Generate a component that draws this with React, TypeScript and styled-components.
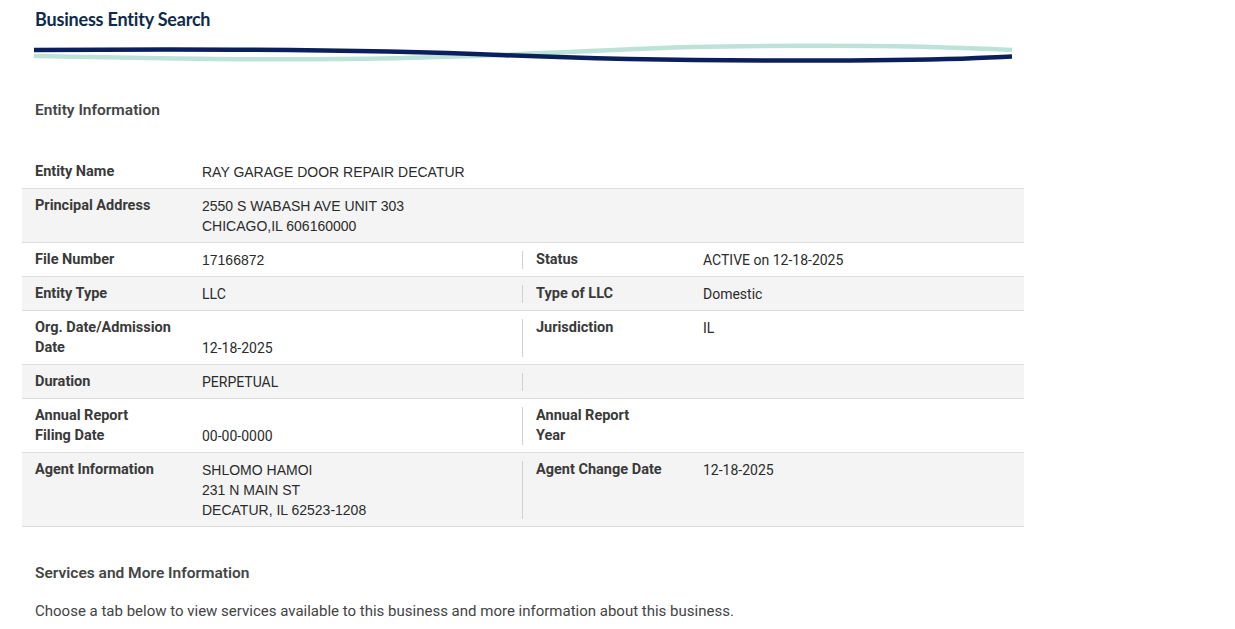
import React from "react";
import styled, { createGlobalStyle } from "styled-components";

const Global = createGlobalStyle`
  html, body { margin: 0; padding: 0; background: #fff; }
  body { font-family: Roboto, "Liberation Sans", sans-serif; color: #333; }
`;

const Page = styled.div`
  width: 1235px;
  padding: 0 0 0 22px;
  box-sizing: border-box;
`;

const Header = styled.header`
  padding: 8px 0 0 13px;
  width: 978px;
`;

const Title = styled.h1`
  margin: 0;
  font-family: Lato, "Noto Sans", sans-serif;
  font-weight: 700;
  font-size: 18px;
  line-height: 22px;
  color: #0f2a4a;
  letter-spacing: -0.2px;
`;

const Wave = styled.svg`
  display: block;
  margin: 10px 0 0 -1px;
`;

const SectionTitle = styled.h2`
  margin: 0;
  padding: 0 0 0 13px;
  font-size: 15.5px;
  line-height: 20px;
  font-weight: 600;
  color: #454545;
`;

const InfoTitle = styled(SectionTitle)`
  margin-top: 34px;
`;

const Table = styled.div`
  margin-top: 35px;
  width: 1002px;
`;

const Row = styled.div<{ $shade?: boolean }>`
  display: flex;
  align-items: stretch;
  background: ${(p) => (p.$shade ? "#f4f4f4" : "#fff")};
  border-bottom: 1px solid #dcdcdc;
`;

const Half = styled.div<{ $full?: boolean }>`
  display: grid;
  grid-template-columns: 180px 1fr;
  padding: 7px 0 6px;
  box-sizing: border-box;
  ${(p) => (p.$full ? "flex: 1;" : "width: 500px;")}
  &:last-child { flex: 1; width: auto; }
`;

const Divider = styled.div`
  width: 1px;
  margin: 8px 0 7px;
  background: #d0d0d0;
`;

const Label = styled.div`
  padding-left: 13px;
  font-size: 14.5px;
  line-height: 20px;
  font-weight: 700;
  color: #3a3a3a;
`;

const Value = styled.div<{ $bottom?: boolean; $arial?: boolean }>`
  font-family: ${(p) => (p.$arial ? '"Liberation Sans", Arial, sans-serif' : 'Roboto, "Liberation Sans", sans-serif')};
  font-size: 14px;
  line-height: 20px;
  color: #2b2b2b;
  align-self: ${(p) => (p.$bottom ? "end" : "start")};
`;

const ServicesTitle = styled(SectionTitle)`
  margin-top: 36px;
`;

const Note = styled.p`
  margin: 18px 0 0;
  padding-left: 13px;
  font-size: 15px;
  line-height: 20px;
  color: #444;
`;

type Cell = { label: React.ReactNode; value?: React.ReactNode; bottom?: boolean; arial?: boolean };

const Pair = ({ c, full }: { c?: Cell; full?: boolean }) => (
  <Half $full={full}>
    {c && (
      <>
        <Label>{c.label}</Label>
        <Value $bottom={c.bottom} $arial={c.arial}>
          {c.value}
        </Value>
      </>
    )}
  </Half>
);

const rows: { left: Cell; right?: Cell | null; full?: boolean }[] = [
  { left: { label: "Entity Name", value: "RAY GARAGE DOOR REPAIR DECATUR", arial: true }, full: true },
  {
    left: {
      label: "Principal Address",
      value: (
        <>
          2550 S WABASH AVE UNIT 303
          <br />
          CHICAGO,IL 606160000
        </>
      ),
      arial: true,
    },
    full: true,
  },
  { left: { label: "File Number", value: "17166872", arial: true }, right: { label: "Status", value: "ACTIVE on 12-18-2025" } },
  { left: { label: "Entity Type", value: "LLC" }, right: { label: "Type of LLC", value: "Domestic" } },
  {
    left: {
      label: (
        <>
          Org. Date/Admission
          <br />
          Date
        </>
      ),
      value: "12-18-2025",
      bottom: true,
    },
    right: { label: "Jurisdiction", value: "IL" },
  },
  { left: { label: "Duration", value: "PERPETUAL" }, right: null },
  {
    left: {
      label: (
        <>
          Annual Report
          <br />
          Filing Date
        </>
      ),
      value: "00-00-0000",
      bottom: true,
    },
    right: {
      label: (
        <>
          Annual Report
          <br />
          Year
        </>
      ),
      value: "",
    },
  },
  {
    left: {
      label: "Agent Information",
      value: (
        <>
          SHLOMO HAMOI
          <br />
          231 N MAIN ST
          <br />
          DECATUR, IL 62523-1208
        </>
      ),
      arial: true,
    },
    right: { label: "Agent Change Date", value: "12-18-2025" },
  },
];

export default function App() {
  return (
    <Page>
      <Global />
      <Header>
        <Title>Business Entity Search</Title>
        <Wave width="978" height="26" viewBox="0 0 978 26" aria-hidden="true">
          <path
            d="M0 16 C 150 19, 300 22, 466 15 S 650 6, 766 5.7 S 940 8, 978 10"
            fill="none"
            stroke="#bde3d9"
            strokeWidth="4.5"
          />
          <path
            d="M0 10 C 200 8.5, 350 10, 466 15 S 700 21, 816 20.5 S 940 18, 978 16.5"
            fill="none"
            stroke="#0b1f5c"
            strokeWidth="4.5"
          />
        </Wave>
      </Header>
      <InfoTitle>Entity Information</InfoTitle>
      <Table>
        {rows.map((r, i) => (
          <Row key={i} $shade={i % 2 === 1}>
            <Pair c={r.left} full={r.full} />
            {!r.full && (
              <>
                <Divider />
                <Pair c={r.right ?? undefined} />
              </>
            )}
          </Row>
        ))}
      </Table>
      <ServicesTitle>Services and More Information</ServicesTitle>
      <Note>Choose a tab below to view services available to this business and more information about this business.</Note>
    </Page>
  );
}
